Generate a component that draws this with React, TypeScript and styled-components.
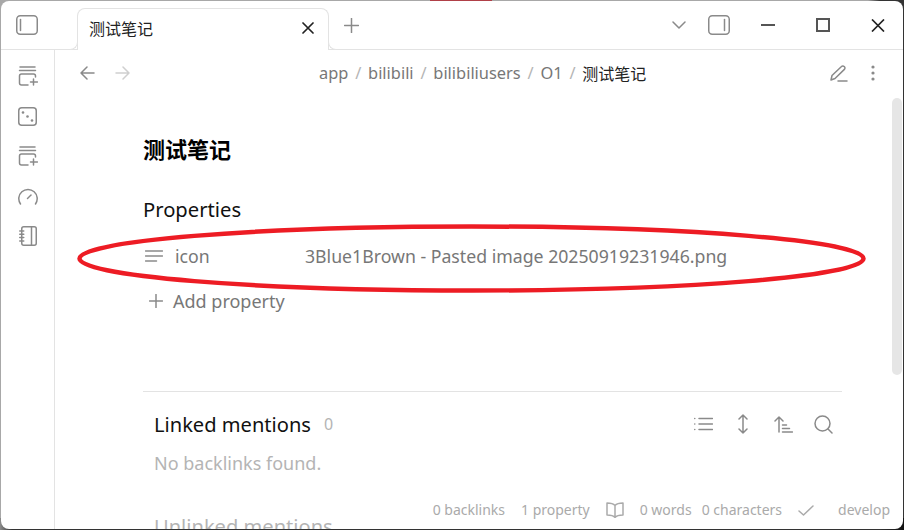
import styled, { createGlobalStyle } from 'styled-components';

const GlobalStyle = createGlobalStyle`
  html, body {
    margin: 0;
    padding: 0;
    width: 904px;
    height: 530px;
    overflow: hidden;
  }
  * {
    box-sizing: border-box;
  }
`;

const Desktop = styled.div`
  width: 904px;
  height: 530px;
  padding: 1px;
  background: linear-gradient(
    to right,
    #a8a8a8 0,
    #a8a8a8 430px,
    #b04048 430px,
    #b04048 492px,
    #a8a8a8 492px,
    #a8a8a8 868px,
    #333 880px
  );
  position: relative;
  overflow: hidden;
  &::after {
    content: '';
    position: absolute;
    left: 0;
    right: 0;
    bottom: 0;
    height: 12px;
    background: linear-gradient(to right, #8c8c8c 0, #333 12px, #333 880px, #111 904px);
  }
`;

const Window = styled.div`
  position: relative;
  z-index: 1;
  width: 100%;
  height: 100%;
  background: #fff;
  border-radius: 8px;
  overflow: hidden;
  display: flex;
  flex-direction: column;
  font-family: 'Noto Sans', 'Noto Sans CJK SC', sans-serif;
  color: #222;
`;

const TitleBar = styled.header`
  height: 49px;
  flex: none;
  display: flex;
`;

const ToggleSlot = styled.div`
  width: 76px;
  border-bottom: 1px solid #e3e3e3;
  padding: 14px 0 0 15px;
`;

const Tab = styled.div`
  position: relative;
  width: 252px;
  margin-top: 7px;
  padding: 0 14px 4px 11px;
  border: 1px solid #e3e3e3;
  border-bottom: none;
  border-radius: 8px 8px 0 0;
  display: flex;
  align-items: center;
  justify-content: space-between;
  font-size: 16px;
  color: #222;
  &::before,
  &::after {
    content: '';
    position: absolute;
    bottom: 0;
    width: 8px;
    height: 8px;
    background: #fff;
    border-bottom: 1px solid #e3e3e3;
  }
  &::before {
    left: -9px;
    border-right: 1px solid #e3e3e3;
    border-bottom-right-radius: 8px;
  }
  &::after {
    right: -9px;
    border-left: 1px solid #e3e3e3;
    border-bottom-left-radius: 8px;
  }
`;

const TabRest = styled.div`
  flex: 1;
  border-bottom: 1px solid #e3e3e3;
  display: flex;
  align-items: center;
  padding: 0 18px 0 15px;
`;

const TabActions = styled.div`
  margin-left: auto;
  display: flex;
  align-items: center;
`;

const Body = styled.div`
  flex: 1;
  min-height: 0;
  display: flex;
`;

const Ribbon = styled.nav`
  width: 54px;
  flex: none;
  border-right: 1px solid #e3e3e3;
  padding-top: 6px;
  display: flex;
  flex-direction: column;
`;

const RibbonItem = styled.div`
  height: 40px;
  display: flex;
  align-items: center;
  justify-content: center;
`;

const Main = styled.main`
  flex: 1;
  min-width: 0;
  position: relative;
  overflow: hidden;
`;

const ViewHeader = styled.div`
  height: 46px;
  padding: 0 28px 0 25px;
  display: flex;
  align-items: center;
`;

const NavGroup = styled.div`
  display: flex;
  align-items: center;
  gap: 20px;
  width: 239px;
`;

const Crumbs = styled.div`
  display: flex;
  align-items: center;
  padding-bottom: 1px;
  font-size: 16.4px;
  color: #777;
  white-space: nowrap;
`;

const Sep = styled.span`
  color: #b5b5b5;
  margin: 0 6.8px;
`;

const Current = styled.span`
  font-size: 16px;
  color: #222;
`;

const HeaderActions = styled.div`
  margin-left: auto;
  display: flex;
  align-items: center;
  gap: 23px;
`;

const Note = styled.div`
  padding: 38px 0 0 88px;
  width: 787px;
`;

const NoteTitle = styled.h1`
  margin: 0;
  font-size: 22px;
  line-height: 30px;
  font-weight: 700;
  color: #000;
`;

const PropsHeading = styled.div`
  margin-top: 32px;
  font-size: 20.2px;
  line-height: 26px;
  color: #111;
`;

const PropRow = styled.div`
  margin-top: 22px;
  height: 24px;
  display: flex;
  align-items: center;
  font-size: 17.7px;
  color: #777;
  padding-left: 2px;
`;

const PropKey = styled.span`
  width: 130px;
  margin-left: 12px;
`;

const AddRow = styled.div`
  margin-top: 21px;
  height: 24px;
  display: flex;
  align-items: center;
  gap: 10px;
  padding-left: 6px;
  font-size: 18px;
  color: #777;
`;

const Backlinks = styled.section`
  margin-top: 78px;
  border-top: 1px solid #e3e3e3;
  padding: 17px 9px 0 11px;
`;

const BacklinksHead = styled.div`
  height: 30px;
  display: flex;
  align-items: center;
`;

const SectionTitle = styled.span`
  font-size: 20.1px;
  color: #111;
`;

const Count = styled.span`
  margin-left: 13px;
  font-size: 16px;
  color: #b4b4b4;
`;

const PaneActions = styled.div`
  margin-left: auto;
  display: flex;
  align-items: center;
`;

const Empty = styled.div`
  margin-top: 11px;
  font-size: 18px;
  line-height: 26px;
  color: #b4b4b4;
`;

const Faded = styled.div`
  margin-top: 38px;
  font-size: 20.1px;
  line-height: 26px;
  color: #b4b4b4;
`;

const StatusBar = styled.footer`
  position: absolute;
  right: 13px;
  bottom: 9px;
  display: flex;
  align-items: center;
  gap: 16px;
  font-size: 14px;
  line-height: 20px;
  color: #aaa;
  background: #fff;
`;

const Counts = styled.div`
  display: flex;
  gap: 10px;
`;

const Scrollbar = styled.div`
  position: absolute;
  top: 48px;
  right: 1px;
  width: 10px;
  height: 277px;
  background: #e6e6e6;
  border-radius: 5px;
`;

const Annotation = styled.svg`
  position: absolute;
  left: 0;
  top: 0;
  z-index: 2;
  pointer-events: none;
`;

const Glyph = styled.svg<{ $tone?: string; $after?: number }>`
  display: block;
  flex: none;
  fill: none;
  stroke: ${(p) => p.$tone ?? '#8a8a8a'};
  stroke-width: 1.5;
  stroke-linecap: round;
  stroke-linejoin: round;
  margin-right: ${(p) => p.$after ?? 0}px;
`;

const StackPlus = () => (
  <Glyph width="20" height="20" viewBox="0 0 20 20">
    <path d="M2 1h15M1.500 4.500h16" />
    <path d="M17.500 11V10a2 2 0 0 0-2-2H3.500a2 2 0 0 0-2 2v7a2 2 0 0 0 2 2H10" />
    <path d="M15.500 13v6M12.500 16h7" />
  </Glyph>
);

export default function App() {
  return (
    <Desktop>
      <GlobalStyle />
      <Window>
        <TitleBar>
          <ToggleSlot>
            <Glyph width="22" height="20" viewBox="0 0 22 20">
              <rect x="0.750" y="0.750" width="20.500" height="18.500" rx="3.500" />
              <path d="M4.500 4.500v11" />
            </Glyph>
          </ToggleSlot>
          <Tab>
            <span>测试笔记</span>
            <Glyph $tone="#222" width="12" height="12" viewBox="0 0 12 12">
              <path d="M1 1l10 10M11 1L1 11" strokeWidth="1.700" />
            </Glyph>
          </Tab>
          <TabRest>
            <Glyph width="15" height="15" viewBox="0 0 15 15">
              <path d="M7.500 0.500v14M0.500 7.500h14" />
            </Glyph>
            <TabActions>
              <Glyph $after={22} width="14" height="8" viewBox="0 0 14 8">
                <path d="M1 1l6 6 6-6" />
              </Glyph>
              <Glyph $after={31} width="22" height="20" viewBox="0 0 22 20">
                <rect x="0.750" y="0.750" width="20.500" height="18.500" rx="3.500" />
                <path d="M16.500 4.500v11" />
              </Glyph>
              <Glyph $tone="#555" $after={41} width="14" height="2" viewBox="0 0 14 2">
                <path d="M0 1h14" strokeLinecap="butt" strokeWidth="2" />
              </Glyph>
              <Glyph $tone="#555" $after={41} width="14" height="14" viewBox="0 0 14 14">
                <rect x="1" y="1" width="12" height="12" strokeWidth="2" strokeLinejoin="miter" />
              </Glyph>
              <Glyph $tone="#222" width="14" height="13" viewBox="0 0 14 13">
                <path d="M1 0.500l12 12M13 0.500l-12 12" strokeWidth="1.700" strokeLinecap="butt" />
              </Glyph>
            </TabActions>
          </TabRest>
        </TitleBar>
        <Body>
          <Ribbon>
            <RibbonItem>
              <StackPlus />
            </RibbonItem>
            <RibbonItem>
              <Glyph width="19" height="19" viewBox="0 0 19 19">
                <rect x="0.750" y="0.750" width="17.500" height="17.500" rx="3" />
                <circle cx="5" cy="5.500" r="1.300" fill="#8a8a8a" stroke="none" />
                <circle cx="9.500" cy="9.500" r="1.300" fill="#8a8a8a" stroke="none" />
                <circle cx="14" cy="13.500" r="1.300" fill="#8a8a8a" stroke="none" />
              </Glyph>
            </RibbonItem>
            <RibbonItem>
              <StackPlus />
            </RibbonItem>
            <RibbonItem>
              <Glyph width="20" height="17" viewBox="0 0 20 17">
                <path d="M2.500 16A9.200 9.200 0 1 1 17.500 16" />
                <path d="M9.500 10.500L13 7" />
              </Glyph>
            </RibbonItem>
            <RibbonItem>
              <Glyph width="18" height="20" viewBox="0 0 18 20">
                <rect x="2.750" y="0.750" width="14.500" height="18.500" rx="2" />
                <path d="M12.500 1v18M0.750 5h4M0.750 8.300h4M0.750 11.600h4M0.750 15h4" />
              </Glyph>
            </RibbonItem>
          </Ribbon>
          <Main>
            <ViewHeader>
              <NavGroup>
                <Glyph width="15" height="14" viewBox="0 0 15 14">
                  <path d="M14 7H1M7 1L1 7l6 6" />
                </Glyph>
                <Glyph $tone="#cfcfcf" width="15" height="14" viewBox="0 0 15 14">
                  <path d="M1 7h13M8 1l6 6-6 6" />
                </Glyph>
              </NavGroup>
              <Crumbs>
                app<Sep>/</Sep>bilibili<Sep>/</Sep>bilibiliusers<Sep>/</Sep>O1<Sep>/</Sep>
                <Current>测试笔记</Current>
              </Crumbs>
              <HeaderActions>
                <Glyph width="18" height="17" viewBox="0 0 18 17">
                  <path d="M1 15l1-4.500L11.500 1.500a1.800 1.800 0 0 1 2.600 0l.3.300a1.800 1.800 0 0 1 0 2.600L5 13.500 1 15z" />
                  <path d="M8 16h9" />
                </Glyph>
                <Glyph width="4" height="16" viewBox="0 0 4 16">
                  <circle cx="2" cy="2" r="1.600" fill="#8a8a8a" stroke="none" />
                  <circle cx="2" cy="8" r="1.600" fill="#8a8a8a" stroke="none" />
                  <circle cx="2" cy="14" r="1.600" fill="#8a8a8a" stroke="none" />
                </Glyph>
              </HeaderActions>
            </ViewHeader>
            <Note>
              <NoteTitle>测试笔记</NoteTitle>
              <PropsHeading>Properties</PropsHeading>
              <PropRow>
                <Glyph width="18" height="12" viewBox="0 0 18 12">
                  <path d="M0.500 1h17M0.500 6h17M0.500 11h11" />
                </Glyph>
                <PropKey>icon</PropKey>
                <span>3Blue1Brown - Pasted image 20250919231946.png</span>
              </PropRow>
              <AddRow>
                <Glyph width="14" height="14" viewBox="0 0 14 14">
                  <path d="M7 0.500v13M0.500 7h13" />
                </Glyph>
                Add property
              </AddRow>
              <Backlinks>
                <BacklinksHead>
                  <SectionTitle>Linked mentions</SectionTitle>
                  <Count>0</Count>
                  <PaneActions>
                    <Glyph $after={25} width="19" height="14" viewBox="0 0 19 14">
                      <path d="M5 1.500h13.500M5 7h13.500M5 12.500h13.500M0.700 1.500h.1M0.700 7h.1M0.700 12.500h.1" />
                    </Glyph>
                    <Glyph $after={26} width="10" height="20" viewBox="0 0 10 20">
                      <path d="M5 1v18M1 5l4-4 4 4M1 15l4 4 4-4" />
                    </Glyph>
                    <Glyph $after={21} width="19" height="17" viewBox="0 0 19 17">
                      <path d="M5 16V1M1 5l4-4 4 4M8.500 9h4M8.500 12.500h7M8.500 16h10" />
                    </Glyph>
                    <Glyph width="19" height="19" viewBox="0 0 19 19">
                      <circle cx="8.500" cy="8.500" r="7.500" />
                      <path d="M18 18l-4-4" />
                    </Glyph>
                  </PaneActions>
                </BacklinksHead>
                <Empty>No backlinks found.</Empty>
                <Faded>Unlinked mentions</Faded>
              </Backlinks>
            </Note>
            <Scrollbar />
            <StatusBar>
              <span>0 backlinks</span>
              <span>1 property</span>
              <Glyph $tone="#aaa" width="18" height="16" viewBox="0 0 18 16">
                <path d="M9 3.500C7.500 1.800 4.500 1 1 1v12c3.500 0 6.500.7 8 2.500 1.500-1.800 4.500-2.500 8-2.500V1c-3.500 0-6.500.8-8 2.500zM9 3.500v12" />
              </Glyph>
              <Counts>
                <span>0 words</span>
                <span>0 characters</span>
              </Counts>
              <Glyph $tone="#aaa" $after={8} width="16" height="11" viewBox="0 0 16 11">
                <path d="M1 6l4.500 4L15 1" />
              </Glyph>
              <span>develop</span>
            </StatusBar>
          </Main>
        </Body>
      </Window>
      <Annotation width="904" height="530" viewBox="0 0 904 530">
        <ellipse cx="471.500" cy="258.500" rx="392" ry="32" fill="none" stroke="#ed1c24" strokeWidth="4.500" />
      </Annotation>
    </Desktop>
  );
}
